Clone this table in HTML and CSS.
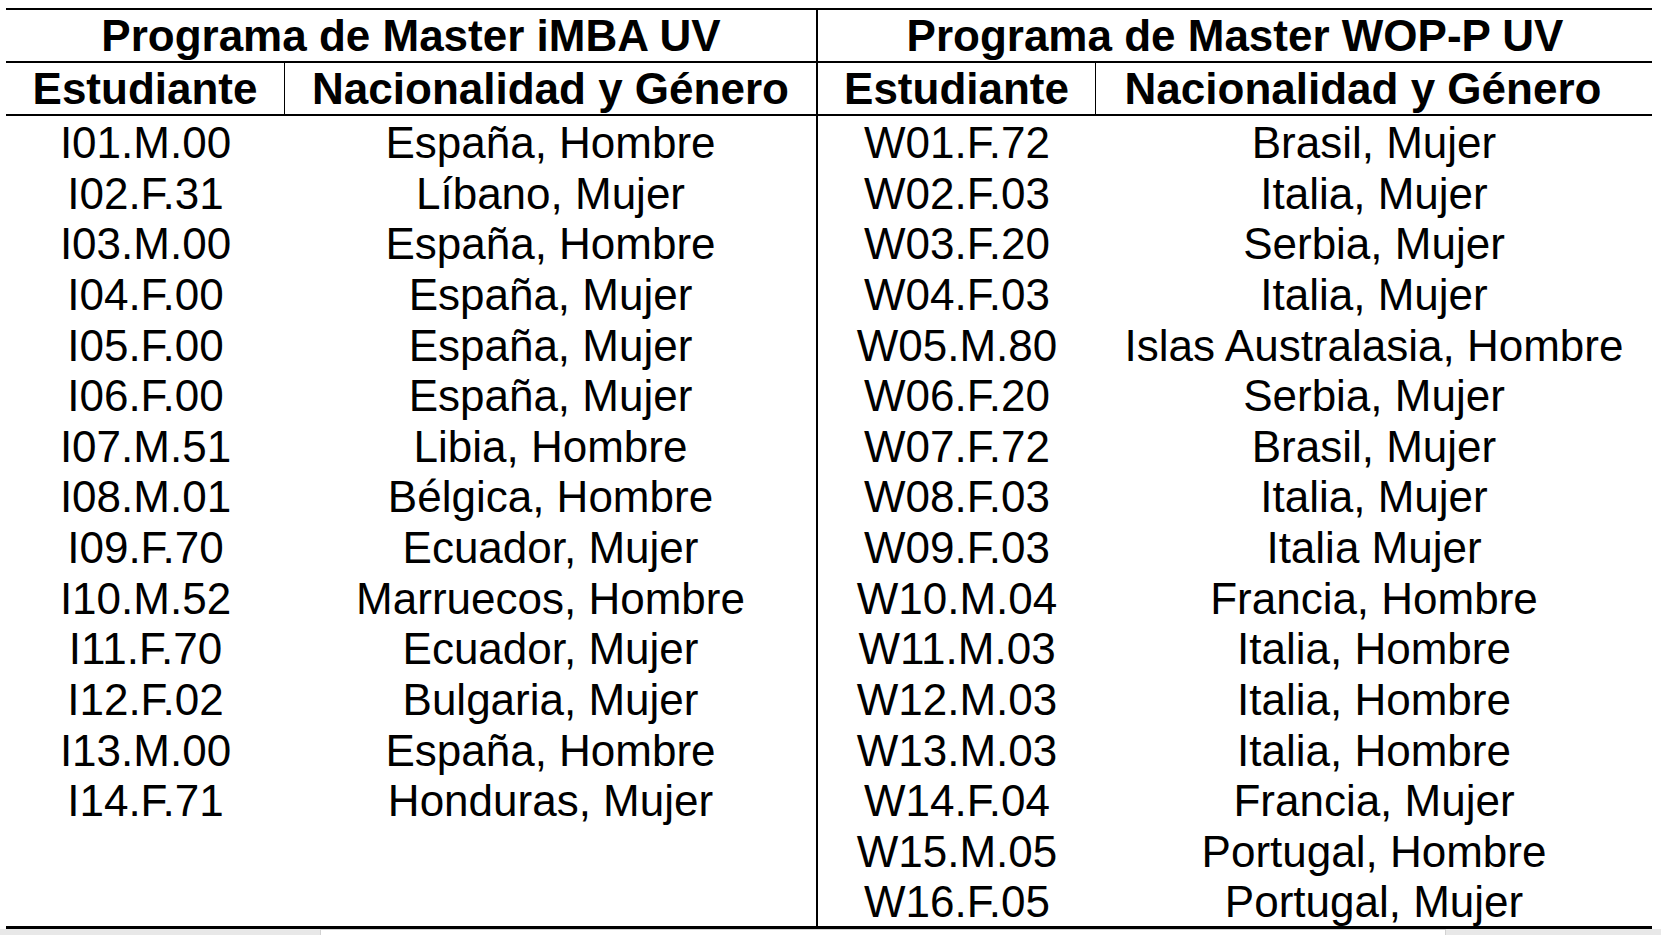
FILE: index.html
```html
<!DOCTYPE html>
<html lang="es">
<head>
<meta charset="utf-8">
<title>Programas de Master UV</title>
<link rel="stylesheet" href="styles.css">
</head>
<body>
<div class="page">
  <div class="sheet">
    <div class="half left">
      <div class="title">Programa de Master iMBA UV</div>
      <div class="row head">
        <div class="c1">Estudiante</div>
        <div class="c2">Nacionalidad y Género</div>
      </div>
      <div class="body">
        <div class="row"><div class="c1">I01.M.00</div><div class="c2">España, Hombre</div></div>
        <div class="row"><div class="c1">I02.F.31</div><div class="c2">Líbano, Mujer</div></div>
        <div class="row"><div class="c1">I03.M.00</div><div class="c2">España, Hombre</div></div>
        <div class="row"><div class="c1">I04.F.00</div><div class="c2">España, Mujer</div></div>
        <div class="row"><div class="c1">I05.F.00</div><div class="c2">España, Mujer</div></div>
        <div class="row"><div class="c1">I06.F.00</div><div class="c2">España, Mujer</div></div>
        <div class="row"><div class="c1">I07.M.51</div><div class="c2">Libia, Hombre</div></div>
        <div class="row"><div class="c1">I08.M.01</div><div class="c2">Bélgica, Hombre</div></div>
        <div class="row"><div class="c1">I09.F.70</div><div class="c2">Ecuador, Mujer</div></div>
        <div class="row"><div class="c1">I10.M.52</div><div class="c2">Marruecos, Hombre</div></div>
        <div class="row"><div class="c1">I11.F.70</div><div class="c2">Ecuador, Mujer</div></div>
        <div class="row"><div class="c1">I12.F.02</div><div class="c2">Bulgaria, Mujer</div></div>
        <div class="row"><div class="c1">I13.M.00</div><div class="c2">España, Hombre</div></div>
        <div class="row"><div class="c1">I14.F.71</div><div class="c2">Honduras, Mujer</div></div>
      </div>
    </div>
    <div class="half right">
      <div class="title">Programa de Master WOP-P UV</div>
      <div class="row head">
        <div class="c1">Estudiante</div>
        <div class="c2">Nacionalidad y Género</div>
      </div>
      <div class="body">
        <div class="row"><div class="c1">W01.F.72</div><div class="c2">Brasil, Mujer</div></div>
        <div class="row"><div class="c1">W02.F.03</div><div class="c2">Italia, Mujer</div></div>
        <div class="row"><div class="c1">W03.F.20</div><div class="c2">Serbia, Mujer</div></div>
        <div class="row"><div class="c1">W04.F.03</div><div class="c2">Italia, Mujer</div></div>
        <div class="row"><div class="c1">W05.M.80</div><div class="c2">Islas Australasia, Hombre</div></div>
        <div class="row"><div class="c1">W06.F.20</div><div class="c2">Serbia, Mujer</div></div>
        <div class="row"><div class="c1">W07.F.72</div><div class="c2">Brasil, Mujer</div></div>
        <div class="row"><div class="c1">W08.F.03</div><div class="c2">Italia, Mujer</div></div>
        <div class="row"><div class="c1">W09.F.03</div><div class="c2">Italia Mujer</div></div>
        <div class="row"><div class="c1">W10.M.04</div><div class="c2">Francia, Hombre</div></div>
        <div class="row"><div class="c1">W11.M.03</div><div class="c2">Italia, Hombre</div></div>
        <div class="row"><div class="c1">W12.M.03</div><div class="c2">Italia, Hombre</div></div>
        <div class="row"><div class="c1">W13.M.03</div><div class="c2">Italia, Hombre</div></div>
        <div class="row"><div class="c1">W14.F.04</div><div class="c2">Francia, Mujer</div></div>
        <div class="row"><div class="c1">W15.M.05</div><div class="c2">Portugal, Hombre</div></div>
        <div class="row"><div class="c1">W16.F.05</div><div class="c2">Portugal, Mujer</div></div>
      </div>
    </div>
  </div>
  <div class="hscroll"><div class="thumb"></div></div>
</div>
</body>
</html>
```

FILE: styles.css
```css
html, body {
  margin: 0;
  padding: 0;
  background: #ffffff;
  overflow: hidden;
}

.page {
  width: 1661px;
  height: 935px;
  display: flex;
  flex-direction: column;
  font-family: "Liberation Sans", Arial, sans-serif;
  color: #000000;
}

.sheet {
  margin: 8px 0 0 6px;
  width: 1646px;
  display: flex;
  border-top: 2px solid #000;
  border-bottom: 3px solid #000;
}

.half {
  display: flex;
  flex-direction: column;
}

.half.left {
  width: 810px;
  border-right: 2px solid #000;
}

.half.right {
  flex: 1;
}

.title {
  height: 51px;
  line-height: 51px;
  font-size: 44px;
  font-weight: bold;
  text-align: center;
  border-bottom: 2px solid #000;
  white-space: nowrap;
}

.row {
  display: grid;
  grid-template-columns: 279px 1fr;
  height: 50.625px;
  line-height: 50.625px;
  font-size: 44px;
  text-align: center;
  white-space: nowrap;
}

.right .row {
  grid-template-columns: 278px 1fr;
}

.row.head {
  height: 51px;
  line-height: 51px;
  font-weight: bold;
  border-bottom: 2px solid #000;
}

.row.head .c1 {
  border-right: 1px solid #000;
}

.right .row.head .c2 {
  padding-right: 22px;
}

.body {
  height: 810px;
  padding-top: 2px;
  box-sizing: border-box;
}

.hscroll {
  height: 6px;
  background: #e8e8e8;
  display: flex;
}

.thumb {
  margin-left: 320px;
  width: 1124px;
  height: 5px;
  background: #ffffff;
  border: 1px solid #d2d2d2;
  border-bottom: none;
}
```
